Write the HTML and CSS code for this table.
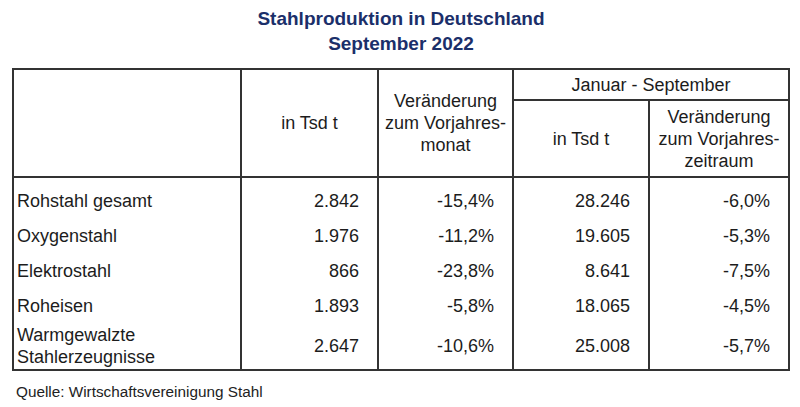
FILE: index.html
```html
<!DOCTYPE html>
<html lang="de">
<head>
<meta charset="utf-8">
<title>Stahlproduktion in Deutschland</title>
<link rel="stylesheet" href="styles.css">
</head>
<body>
<div class="page">
  <h1 class="title">Stahlproduktion in Deutschland<br>September 2022</h1>
  <table class="data">
    <colgroup>
      <col class="c1"><col class="c2"><col class="c3"><col class="c4"><col class="c5">
    </colgroup>
    <thead>
      <tr class="h1">
        <th rowspan="2"></th>
        <th rowspan="2">in Tsd t</th>
        <th rowspan="2">Veränderung<br>zum Vorjahres-<br>monat</th>
        <th colspan="2" class="span">Januar - September</th>
      </tr>
      <tr class="h2">
        <th>in Tsd t</th>
        <th>Veränderung<br>zum Vorjahres-<br>zeitraum</th>
      </tr>
    </thead>
    <tbody>
      <tr class="first"><td>Rohstahl gesamt</td><td>2.842</td><td>-15,4%</td><td>28.246</td><td>-6,0%</td></tr>
      <tr><td>Oxygenstahl</td><td>1.976</td><td>-11,2%</td><td>19.605</td><td>-5,3%</td></tr>
      <tr><td>Elektrostahl</td><td>866</td><td>-23,8%</td><td>8.641</td><td>-7,5%</td></tr>
      <tr><td>Roheisen</td><td>1.893</td><td>-5,8%</td><td>18.065</td><td>-4,5%</td></tr>
      <tr class="last"><td>Warmgewalzte<br>Stahlerzeugnisse</td><td>2.647</td><td>-10,6%</td><td>25.008</td><td>-5,7%</td></tr>
    </tbody>
  </table>
  <p class="source">Quelle: Wirtschaftsvereinigung Stahl</p>
</div>
</body>
</html>
```

FILE: styles.css
```css
html, body {
  margin: 0;
  padding: 0;
  background: #ffffff;
}
body {
  font-family: "Liberation Sans", Arial, sans-serif;
  color: #1c1c1c;
  width: 800px;
  height: 407px;
  overflow: hidden;
}
.page {
  padding-top: 6px;
}
.title {
  margin: 0;
  font-size: 19px;
  line-height: 25px;
  font-weight: bold;
  color: #1b2f6a;
  text-align: center;
  padding-left: 2px;
}
.data {
  margin: 12px 0 0 12px;
  border-collapse: collapse;
  table-layout: fixed;
  width: 777px;
  font-size: 18px;
  line-height: 22px;
}
.c1 { width: 228px; }
.c2 { width: 137px; }
.c3 { width: 135px; }
.c4 { width: 136px; }
.c5 { width: 140px; }
.data th,
.data td {
  border-left: 2px solid #333333;
  border-right: 2px solid #333333;
  padding: 0;
}
.data th {
  font-weight: normal;
  text-align: center;
  vertical-align: middle;
  border-top: 2px solid #333333;
  border-bottom: 2px solid #333333;
}
.h1 th.span {
  height: 29px;
}
.h2 th {
  height: 75px;
}
.data td {
  text-align: right;
  padding: 6px 18px 7px 0;
  vertical-align: middle;
}
.data td:first-child {
  text-align: left;
  padding-left: 3px;
  padding-right: 0;
}
.data tr.first td {
  padding-top: 12px;
}
.data tr.last td {
  padding-top: 0;
  padding-bottom: 1px;
  border-bottom: 2px solid #333333;
}
.source {
  margin: 12px 0 0 16px;
  font-size: 15.3px;
  line-height: 18px;
  color: #222222;
}
```
